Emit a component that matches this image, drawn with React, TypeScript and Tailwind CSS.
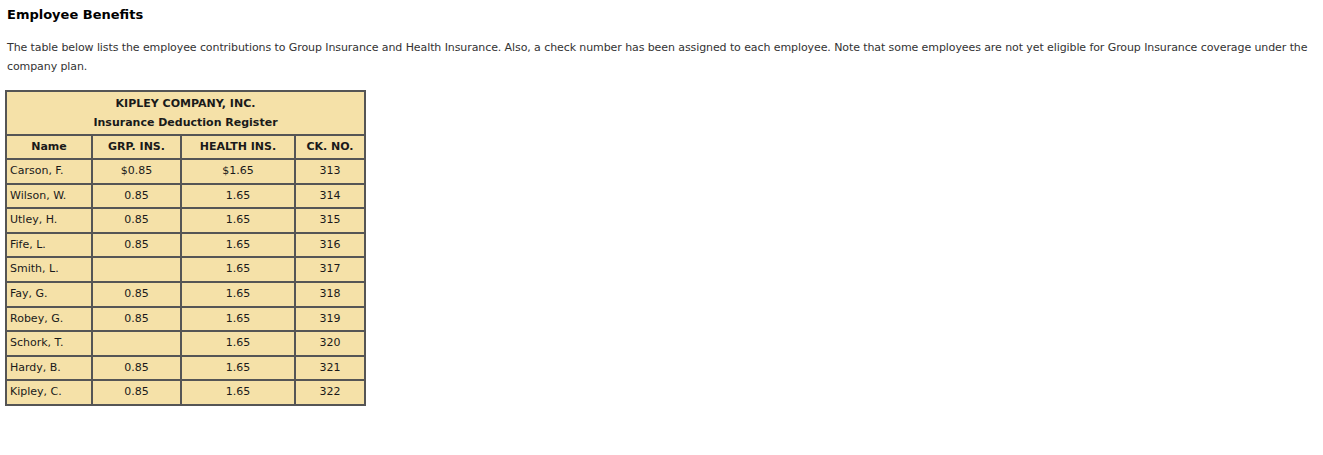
import React from "react";

const rows: [string, string, string, string][] = [
  ["Carson, F.", "$0.85", "$1.65", "313"],
  ["Wilson, W.", "0.85", "1.65", "314"],
  ["Utley, H.", "0.85", "1.65", "315"],
  ["Fife, L.", "0.85", "1.65", "316"],
  ["Smith, L.", "", "1.65", "317"],
  ["Fay, G.", "0.85", "1.65", "318"],
  ["Robey, G.", "0.85", "1.65", "319"],
  ["Schork, T.", "", "1.65", "320"],
  ["Hardy, B.", "0.85", "1.65", "321"],
  ["Kipley, C.", "0.85", "1.65", "322"],
];

export default function App() {
  return (
    <div
      className="w-[1323px] h-[455px] bg-white px-[7px] pt-[5px] text-[#333]"
      style={{ fontFamily: "Verdana, 'DejaVu Sans', sans-serif" }}
    >
      <h1 className="text-[13px] font-bold text-black leading-[19px]">Employee Benefits</h1>
      <p className="mt-[14px] text-[11px] leading-[19px] tracking-[-0.09px] pr-0">
        The table below lists the employee contributions to Group Insurance and Health Insurance. Also, a check number has been assigned to each employee. Note that some employees are not yet eligible for Group Insurance coverage under the company plan.
      </p>
      <table className="mt-[14px] -ml-[2px] border-separate border-spacing-0 border border-[#555] bg-[#f5e1a8] text-[11px] text-[#1a1a1a]">
        <tbody>
          <tr>
            <td colSpan={4} className="border border-[#555] text-center font-bold h-[44px] leading-[19px] py-0">
              KIPLEY COMPANY, INC.
              <br />
              Insurance Deduction Register
            </td>
          </tr>
          <tr className="h-[24px]">
            <th className="w-[86px] border border-[#555] font-bold text-center pt-[1px]">Name</th>
            <th className="w-[89px] border border-[#555] font-bold text-center pt-[1px]">GRP. INS.</th>
            <th className="w-[114px] border border-[#555] font-bold text-center pt-[1px]">HEALTH INS.</th>
            <th className="w-[70px] border border-[#555] font-bold text-center pt-[1px]">CK. NO.</th>
          </tr>
          {rows.map((r) => (
            <tr key={r[3]} className="h-[24.6px]">
              <td className="border border-[#555] text-left pl-[3px]">{r[0]}</td>
              <td className="border border-[#555] text-center">{r[1]}</td>
              <td className="border border-[#555] text-center">{r[2]}</td>
              <td className="border border-[#555] text-center">{r[3]}</td>
            </tr>
          ))}
        </tbody>
      </table>
    </div>
  );
}
